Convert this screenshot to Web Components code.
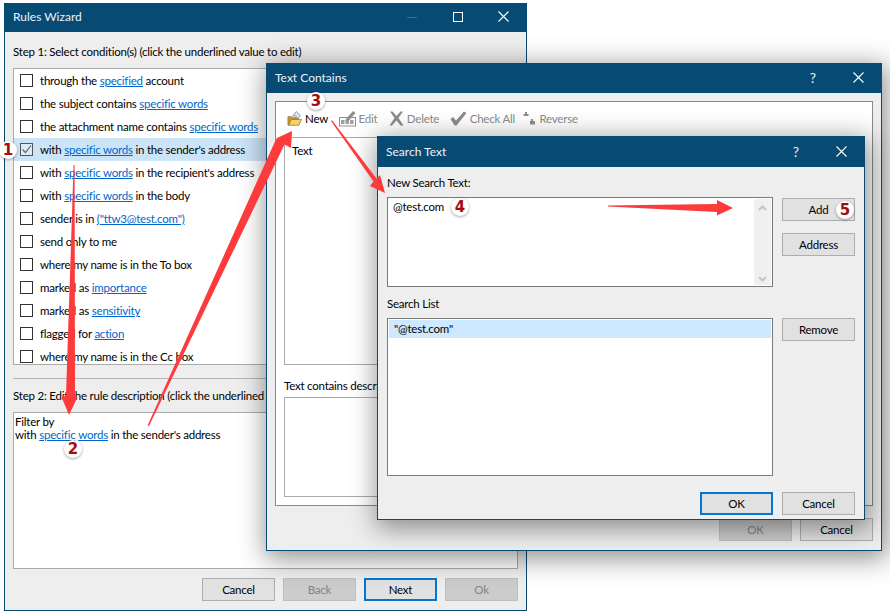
<!DOCTYPE html>
<html>
<head>
<meta charset="utf-8">
<title>Rules Wizard</title>
<style>
  html, body { margin: 0; padding: 0; background: #fff; }
  body { font: 11.5px/13px Lato, "Open Sans", sans-serif; letter-spacing: -0.22px; color: #000; }
</style>
</head>
<body>
<desktop-view>
  <rules-wizard></rules-wizard>
  <text-contains></text-contains>
  <search-text></search-text>
  <step-arrows></step-arrows>
  <step-badge style="left:-1px;top:141px">1</step-badge>
  <step-badge style="left:64px;top:440px">2</step-badge>
  <step-badge style="left:307px;top:92px">3</step-badge>
  <step-badge style="left:451px;top:198px">4</step-badge>
  <step-badge style="left:836px;top:201px">5</step-badge>
</desktop-view>

<script>
// Window frame with the dark blue caption bar
class WinDialog extends HTMLElement {
    constructor() {
        super();
        this.attachShadow({ mode: 'open' });
    }

    connectedCallback() {
        const controls = (this.getAttribute('controls') || 'close').split(' ');
        const icons = {
            help: '<span class="help">?</span>',
            min: '<svg width="10" height="10"><path d="M0 5.500h10" stroke="#3f7190"/></svg>',
            max: '<svg width="10" height="10"><rect x=".5" y=".5" width="9" height="9" fill="none" stroke="#fff"/></svg>',
            close: '<svg width="11" height="11"><path d="M.5.500l10 10M10.500.500l-10 10" stroke="#fff" stroke-width="1.1"/></svg>'
        };
        this.shadowRoot.innerHTML = `
        <style>
          :host {
            position: absolute;
            display: flex;
            flex-direction: column;
            box-sizing: border-box;
            border: 1px solid #074a73;
            background: #eeeeee;
          }
          :host([shadow]) { box-shadow: 2px 5px 24px 3px rgba(0,0,0,.42); }
          .bar {
            flex: none;
            height: var(--bar-h, 29px);
            background: #074a73;
            color: #eef3f7;
            display: flex;
            align-items: center;
            margin: -1px -1px 0;
            padding: 0 0 var(--bar-pad, 2px) 9px;
            box-sizing: border-box;
            font-size: 12px;
            letter-spacing: 0;
          }
          .title { flex: 1; }
          .ctl { width: 46px; display: flex; justify-content: center; align-items: center; }
          .ctl:last-child { width: 47px; margin-left: -1px; }
          .help { font-size: 14px; }
          .body { flex: 1; min-height: 0; display: flex; flex-direction: column; }
        </style>
        <div class="bar">
          <span class="title">${this.getAttribute('heading')}</span>
          ${controls.map(c => `<span class="ctl">${icons[c]}</span>`).join('')}
        </div>
        <div class="body"><slot></slot></div>
      `;
    }
}

class UiButton extends HTMLElement {
    constructor() {
        super();
        this.attachShadow({ mode: 'open' });
        this.shadowRoot.innerHTML = `
        <style>
          :host {
            display: flex;
            align-items: center;
            justify-content: center;
            box-sizing: border-box;
            width: 73px;
            height: 23px;
            background: #e1e1e1;
            border: 1px solid #adadad;
            color: #000;
          }
          :host([focused]) { border: 2px solid #0078d7; }
          :host([disabled]) { background: #cccccc; border-color: #bfbfbf; color: #838383; }
        </style>
        <slot></slot>
      `;
    }
}

class RuleLink extends HTMLElement {
    constructor() {
        super();
        this.attachShadow({ mode: 'open' });
        this.shadowRoot.innerHTML = `
        <style>
          :host { display: inline-block; color: #0066cc; text-decoration: underline; }
        </style>
        <slot></slot>
      `;
    }
}

class RuleRow extends HTMLElement {
    constructor() {
        super();
        this.attachShadow({ mode: 'open' });
        this.shadowRoot.innerHTML = `
        <style>
          :host {
            display: flex;
            flex: none;
            align-items: center;
            height: 23px;
            padding-left: 6px;
            white-space: nowrap;
          }
          :host([checked]) { background: #cce4f7; }
          .box {
            flex: none;
            box-sizing: border-box;
            width: 13px;
            height: 13px;
            border: 1px solid #333;
            background: #fff;
            margin-right: 7px;
            display: flex;
          }
          :host([checked]) .box { border-color: #555; background: #dfeaf3; }
          svg { display: none; }
          :host([checked]) svg { display: block; }
        </style>
        <span class="box"><svg width="11" height="11"><path d="M1.500 5.500l3 3 5.500-7" fill="none" stroke="#666" stroke-width="1.2"/></svg></span>
        <span><slot></slot></span>
      `;
    }
}

class StepBadge extends HTMLElement {
    constructor() {
        super();
        this.attachShadow({ mode: 'open' });
        this.shadowRoot.innerHTML = `
        <style>
          :host {
            position: absolute;
            display: flex;
            align-items: center;
            justify-content: center;
            width: 18px;
            height: 18px;
            border-radius: 50%;
            background: #fff;
            box-shadow: 0 1px 3px rgba(0,0,0,.35);
            color: #a30d12;
            font: bold 15px/18px "DejaVu Sans", sans-serif;
            letter-spacing: 0;
          }
        </style>
        <slot></slot>
      `;
    }
}

// Red arrows drawn over all the windows
class StepArrows extends HTMLElement {
    constructor() {
        super();
        this.attachShadow({ mode: 'open' });
        this.shadowRoot.innerHTML = `
        <style>
          :host { position: absolute; left: 0; top: 0; width: 890px; height: 615px; pointer-events: none; }
          svg { display: block; }
          polygon { fill: #fd3a3c; }
        </style>
        <svg width="890" height="615">
          <polygon points="73.6,165 74.6,165 75,396 77.5,397 69,415 61.5,397 66,396"/>
          <polygon points="292,131 291,148 284.5,144.5 149,426 147.6,425.4 275,141.5 277,138"/>
          <polygon points="331,121 332,120.3 376.5,178.5 380,175 385,193 370,186 373.5,181.5"/>
          <polygon points="608,205.5 717,204 717,200 733,208 717,215.5 717,212 608,206.5"/>
        </svg>
      `;
    }
}

class RulesWizard extends HTMLElement {
    constructor() {
        super();
        this.attachShadow({ mode: 'open' });
        this.shadowRoot.innerHTML = `
        <style>
          :host { display: block; }
          .wrap { flex: 1; display: flex; flex-direction: column; height: 100%; padding: 0 8px; box-sizing: border-box; }
          .step1 { height: 36px; display: flex; align-items: center; padding-top: 3px; box-sizing: border-box; white-space: nowrap; }
          .list {
            height: 297px;
            box-sizing: border-box;
            border: 1px solid #aaa;
            background: #fff;
            overflow: hidden;
            display: flex;
            flex-direction: column;
          }
          .sep { margin-top: 13px; border-top: 1px solid #b5b5b5; }
          .step2 { height: 33px; display: flex; align-items: center; white-space: nowrap; }
          .desc {
            height: 157px;
            box-sizing: border-box;
            border: 1px solid #aaa;
            background: #fff;
            padding: 2px 1px;
            white-space: nowrap;
          }
          .buttons { display: flex; justify-content: flex-end; gap: 8px; margin-top: 9px; }
        </style>
        <win-dialog heading="Rules Wizard" controls="min max close" style="left:4px;top:3px;width:523px;height:608px">
          <div class="wrap">
            <div class="step1">Step 1: Select condition(s) (click the underlined value to edit)</div>
            <div class="list">
              <rule-row>through the <rule-link>specified</rule-link> account</rule-row>
              <rule-row>the subject contains <rule-link>specific words</rule-link></rule-row>
              <rule-row>the attachment name contains <rule-link>specific words</rule-link></rule-row>
              <rule-row checked>with <rule-link>specific words</rule-link> in the sender's address</rule-row>
              <rule-row>with <rule-link>specific words</rule-link> in the recipient's address</rule-row>
              <rule-row>with <rule-link>specific words</rule-link> in the body</rule-row>
              <rule-row>sender is in <rule-link>("ttw3@test.com")</rule-link></rule-row>
              <rule-row>send only to me</rule-row>
              <rule-row>where my name is in the To box</rule-row>
              <rule-row>marked as <rule-link>importance</rule-link></rule-row>
              <rule-row>marked as <rule-link>sensitivity</rule-link></rule-row>
              <rule-row>flagged for <rule-link>action</rule-link></rule-row>
              <rule-row>where my name is in the Cc box</rule-row>
            </div>
            <div class="sep"></div>
            <div class="step2">Step 2: Edit the rule description (click the underlined value to edit)</div>
            <div class="desc">Filter by<br>with <rule-link>specific</rule-link> <rule-link>words</rule-link> in the sender's address</div>
            <div class="buttons">
              <ui-button>Cancel</ui-button>
              <ui-button disabled>Back</ui-button>
              <ui-button focused>Next</ui-button>
              <ui-button disabled>Ok</ui-button>
            </div>
          </div>
        </win-dialog>
      `;
    }
}

class ToolItem extends HTMLElement {
    constructor() {
        super();
        this.attachShadow({ mode: 'open' });
        this.shadowRoot.innerHTML = `
        <style>
          :host { display: flex; align-items: center; gap: 3px; color: #8a8a8a; white-space: nowrap; }
          :host([active]) { color: #000; }
          ::slotted(svg) { display: block; flex: none; }
        </style>
        <slot name="icon"></slot><slot></slot>
      `;
    }
}

class TextContains extends HTMLElement {
    constructor() {
        super();
        this.attachShadow({ mode: 'open' });
        this.shadowRoot.innerHTML = `
        <style>
          :host { display: block; }
          .wrap { display: flex; flex-direction: column; height: 100%; padding: 8px 8px 0; box-sizing: border-box; }
          .panel {
            height: 405px;
            box-sizing: border-box;
            border: 1px solid #8a8a8a;
            background: #fff;
            padding: 0 8px;
            display: flex;
            flex-direction: column;
          }
          .tools { height: 35px; display: flex; align-items: center; padding: 0 0 2px 3px; box-sizing: border-box; gap: 10.5px; }
          .list { height: 228px; box-sizing: border-box; border: 1px solid #aaa; padding: 6px 7px; }
          .label { height: 32px; display: flex; align-items: flex-end; padding-bottom: 5px; box-sizing: border-box; white-space: nowrap; }
          .box { height: 100px; box-sizing: border-box; border: 1px solid #aaa; }
          .buttons { display: flex; justify-content: flex-end; gap: 8px; margin-top: 12px; }
        </style>
        <win-dialog shadow heading="Text Contains" controls="help close" style="left:266px;top:63px;width:616px;height:488px;--bar-h:30px">
          <div class="wrap">
            <div class="panel">
              <div class="tools">
                <tool-item active>
                  <svg slot="icon" width="15" height="17" viewBox="0 0 16 17">
                    <path d="M6 6l4-5 4 4-2 4z" fill="#dfe3ea" stroke="#7d8590" stroke-width=".8"/>
                    <path d="M8 4.500l2.500 2" stroke="#7d8590" stroke-width=".8"/>
                    <path d="M1 6.500h4l1 1.500h5v2H4.500L2 15.500H1z" fill="#c79a3c" stroke="#8a6a22" stroke-width=".7"/>
                    <path d="M4.500 9.500H15.500L12.500 15.700H1.800z" fill="#f4d16a" stroke="#9a7726" stroke-width=".8"/>
                  </svg>
                  New
                </tool-item>
                <tool-item>
                  <svg slot="icon" width="17" height="17" viewBox="0 0 17 17">
                    <rect x=".5" y="7.500" width="16" height="8.500" fill="#fff" stroke="#8f8f8f"/>
                    <rect x="2" y="10" width="3.500" height="4" fill="#a0a0a0"/>
                    <rect x="6.500" y="10" width="3.500" height="4" fill="#a0a0a0"/>
                    <rect x="11" y="10" width="3.500" height="4" fill="#a0a0a0"/>
                    <path d="M7 9l7-8 2.500 2-6.500 7.500-3.500 1z" fill="#8f8f8f"/>
                  </svg>
                  Edit
                </tool-item>
                <tool-item style="margin-left:1px">
                  <svg slot="icon" width="15" height="15" viewBox="0 0 15 15">
                    <path d="M1 .5l2.500 0 4 4.500 4-4.500 2.500 0-4.500 6.500 5 7.500-3 0-4-5-4.500 5-2.500 0 5-7.500z" fill="#8d8d8d"/>
                  </svg>
                  Delete
                </tool-item>
                <tool-item>
                  <svg slot="icon" width="17" height="15" viewBox="0 0 17 15">
                    <path d="M.5 8l2.500-2 3 3.500 8-9 2.500 1.500-10 12.500h-2z" fill="#8d8d8d"/>
                  </svg>
                  Check All
                </tool-item>
                <tool-item style="margin-left:-3px">
                  <svg slot="icon" width="14" height="15" viewBox="0 0 14 15">
                    <path d="M3 1h2v2h1.500v2h-5v-2h1.500zM9 8h2v2h2v3.500H8V10h1z" fill="#8d8d8d"/>
                  </svg>
                  Reverse
                </tool-item>
              </div>
              <div class="list">Text</div>
              <div class="label">Text contains description:</div>
              <div class="box"></div>
            </div>
            <div class="buttons">
              <ui-button disabled>OK</ui-button>
              <ui-button>Cancel</ui-button>
            </div>
          </div>
        </win-dialog>
      `;
    }
}

class SearchText extends HTMLElement {
    constructor() {
        super();
        this.attachShadow({ mode: 'open' });
        this.shadowRoot.innerHTML = `
        <style>
          :host { display: block; }
          .wrap { display: grid; grid-template-columns: 386px 73px; column-gap: 9px; padding: 0 9px; height: 100%; box-sizing: border-box; }
          .left { display: flex; flex-direction: column; }
          .right { display: flex; flex-direction: column; gap: 12px; padding-top: 31px; }
          .label { height: 30px; display: flex; align-items: center; }
          .label.two { height: 31px; align-items: flex-end; padding-bottom: 8px; box-sizing: border-box; }
          .input {
            height: 90px;
            box-sizing: border-box;
            border: 1px solid #7a7a7a;
            background: #fff;
            padding: 2px 5px 3px;
            display: flex;
          }
          .value { flex: 1; }
          .scroll { width: 17px; margin: -1px -4px -2px 0; background: #f0f0f0; display: flex; flex-direction: column; justify-content: space-between; align-items: center; padding: 6px 0 3px; box-sizing: border-box; }
          .list { height: 158px; box-sizing: border-box; border: 1px solid #7a7a7a; background: #fff; padding: 1px; }
          .sel { height: 18px; box-sizing: border-box; background: #cde8ff; padding: 0 0 2px 5px; display: flex; align-items: center; }
          .remove { margin-top: 50px; }
          .buttons { grid-column: 1 / 3; display: flex; justify-content: flex-end; gap: 9px; margin-top: 12px; }
        </style>
        <win-dialog shadow heading="Search Text" controls="help close" style="left:377px;top:136px;width:488px;height:384px;--bar-h:31px;--bar-pad:0px">
          <div class="wrap">
            <div class="left">
              <div class="label">New Search Text:</div>
              <div class="input">
                <span class="value">@test.com</span>
                <span class="scroll">
                  <svg width="9" height="6"><path d="M1 5l3.500-3.500L8 5" fill="none" stroke="#c4c4c4" stroke-width="2"/></svg>
                  <svg width="9" height="6"><path d="M1 1l3.500 3.500L8 1" fill="none" stroke="#c4c4c4" stroke-width="2"/></svg>
                </span>
              </div>
              <div class="label two">Search List</div>
              <div class="list"><div class="sel">"@test.com"</div></div>
            </div>
            <div class="right">
              <ui-button>Add</ui-button>
              <ui-button>Address</ui-button>
              <ui-button class="remove">Remove</ui-button>
            </div>
            <div class="buttons">
              <ui-button focused>OK</ui-button>
              <ui-button>Cancel</ui-button>
            </div>
          </div>
        </win-dialog>
      `;
    }
}

class DesktopView extends HTMLElement {
    constructor() {
        super();
        this.attachShadow({ mode: 'open' });
        this.shadowRoot.innerHTML = `
        <style>
          :host { display: block; position: relative; width: 890px; height: 615px; overflow: hidden; }
        </style>
        <slot></slot>
      `;
    }
}

customElements.define('win-dialog', WinDialog);
customElements.define('ui-button', UiButton);
customElements.define('rule-link', RuleLink);
customElements.define('rule-row', RuleRow);
customElements.define('step-badge', StepBadge);
customElements.define('step-arrows', StepArrows);
customElements.define('tool-item', ToolItem);
customElements.define('rules-wizard', RulesWizard);
customElements.define('text-contains', TextContains);
customElements.define('search-text', SearchText);
customElements.define('desktop-view', DesktopView);
</script>
</body>
</html>
